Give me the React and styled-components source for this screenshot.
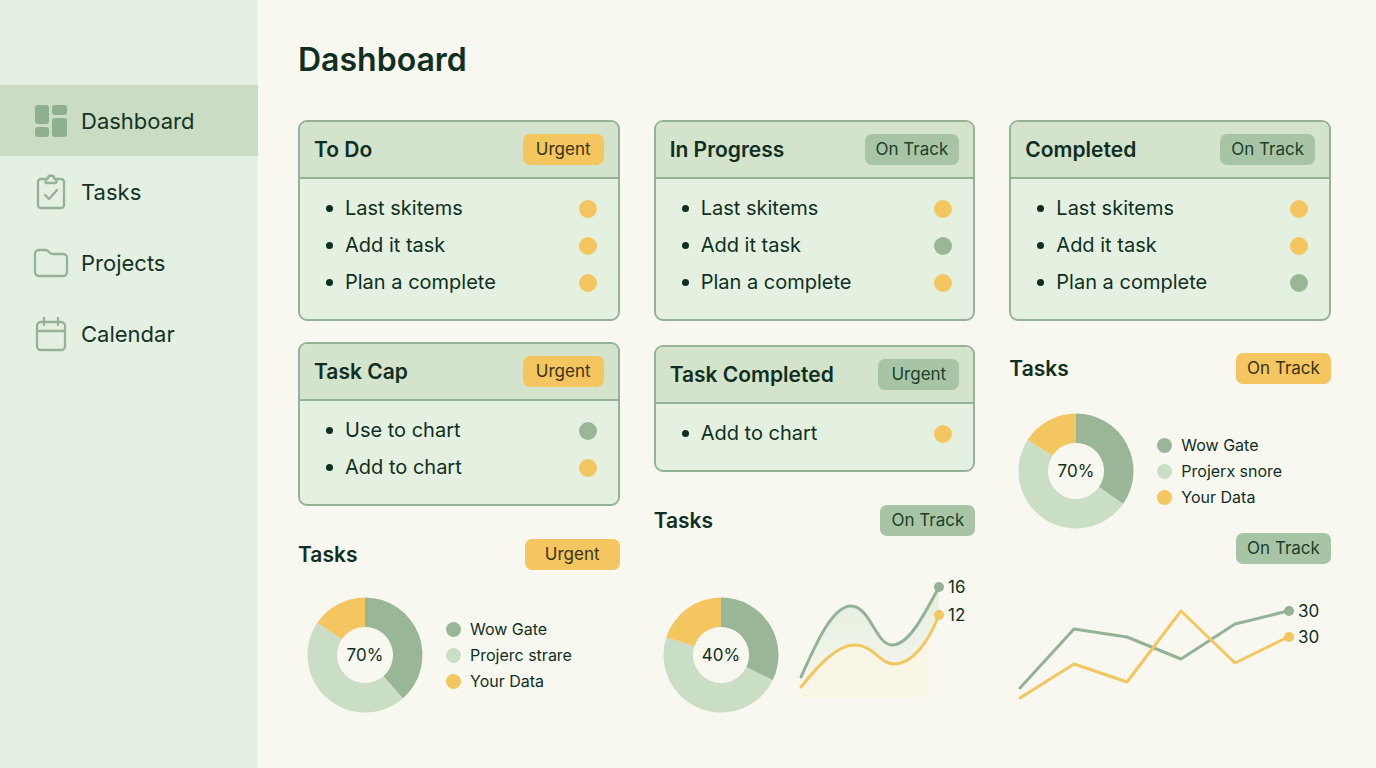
import React from 'react';
import styled, { createGlobalStyle } from 'styled-components';

const colors = {
  ink: '#0f2f22',
  green: '#99b797',
  pale: '#cadec5',
  yellow: '#f3c65f',
  border: '#94b296',
  page: '#f9f8f0',
};

const GlobalStyle = createGlobalStyle`
  * {
    box-sizing: border-box;
  }

  body {
    margin: 0;
    font-family: Inter, 'Liberation Sans', sans-serif;
    color: ${colors.ink};
    background-color: ${colors.page};
  }
`;

const Layout = styled.div`
  display: flex;
  min-height: 100vh;
`;

const Sidebar = styled.nav`
  flex: 0 0 258px;
  padding-top: 85px;
  background-color: #e4f0e1;
`;

const NavLink = styled.a`
  display: flex;
  align-items: center;
  gap: 13px;
  height: 71px;
  padding-left: 34px;
  font-size: 22px;
  color: #143326;
  text-decoration: none;
  background-color: ${props => (props.$active ? '#cadcc4' : 'transparent')};

  svg {
    flex: none;
  }
`;

const Main = styled.main`
  flex: 1;
  min-width: 0;
  padding: 40px 45px 40px 40px;
`;

const PageTitle = styled.h1`
  margin: 0 0 40px;
  font-size: 32px;
  line-height: 40px;
  font-weight: 600;
`;

const Board = styled.div`
  display: grid;
  grid-template-columns: repeat(3, minmax(0, 1fr));
  column-gap: 34px;
`;

const Column = styled.div`
  display: flex;
  flex-direction: column;
`;

const CardBox = styled.section`
  margin-bottom: ${props => props.$space}px;
  border: 2px solid ${colors.border};
  border-radius: 9px;
  background-color: #e4f1e0;
  overflow: hidden;
`;

const Badge = styled.span`
  min-width: 95px;
  padding: 0 11px;
  border-radius: 7px;
  font-size: 17px;
  line-height: 31px;
  text-align: center;
  white-space: nowrap;
  color: ${props => (props.$tone === 'yellow' ? '#3b3316' : '#1c3f2d')};
  background-color: ${props =>
    props.$tone === 'yellow' ? colors.yellow : '#a7c5a4'};
`;

const CardHeader = styled.header`
  display: flex;
  align-items: center;
  justify-content: space-between;
  height: 57px;
  padding: 0 14px;
  border-bottom: 2px solid ${colors.border};
  background-color: #d4e3cc;

  ${Badge} {
    min-width: 81px;
  }
`;

const Heading = styled.h2`
  margin: 0;
  font-size: 21px;
  line-height: 26px;
  font-weight: 600;
`;

const List = styled.ul`
  margin: 0;
  padding: 11px 21px 18px 26px;
  list-style: none;
`;

const Item = styled.li`
  display: flex;
  align-items: center;
  font-size: 20px;
  line-height: 37px;

  &::before {
    content: '';
    width: 7px;
    height: 7px;
    margin-right: 12px;
    border-radius: 50%;
    background-color: ${colors.ink};
  }
`;

const Dot = styled.span`
  flex: none;
  width: ${props => props.$size}px;
  height: ${props => props.$size}px;
  margin-left: ${props => (props.$end ? 'auto' : 0)};
  border-radius: 50%;
  background-color: ${props => colors[props.$color]};
`;

const SectionHeader = styled.header`
  display: flex;
  align-items: center;
  justify-content: ${props => (props.$end ? 'flex-end' : 'space-between')};
  margin-bottom: ${props => props.$space}px;
`;

const ChartRow = styled.div`
  display: flex;
  align-items: ${props => props.$align || 'center'};
  gap: 23px;
  margin-bottom: ${props => props.$space || 0}px;
  padding-left: 9px;
`;

const Legend = styled.ul`
  margin: 0;
  padding: 0;
  list-style: none;
`;

const LegendItem = styled.li`
  display: flex;
  align-items: center;
  gap: 9px;
  font-size: 16px;
  line-height: 26px;
  white-space: nowrap;
`;

const Chart = styled.svg`
  display: block;
  flex: none;
  overflow: visible;
  font-family: inherit;
  font-size: 17px;
  fill: none;
  stroke-width: 3;
  stroke-linejoin: round;
  stroke-linecap: round;

  text {
    fill: ${colors.ink};
  }
`;

const icons = {
  dashboard: (
    <g fill="#8fb08f">
      <rect x="1" y="1" width="14" height="19" rx="3" />
      <rect x="18" y="1" width="15" height="10" rx="3" />
      <rect x="1" y="23" width="14" height="10" rx="3" />
      <rect x="18" y="14" width="15" height="19" rx="3" />
    </g>
  ),
  tasks: (
    <g>
      <path d="M12 4H7a3 3 0 0 0-3 3v23a3 3 0 0 0 3 3h20a3 3 0 0 0 3-3V7a3 3 0 0 0-3-3h-5" />
      <path d="M13 8h8q2 0 1.500-2.500Q22 4 20.500 4Q20 0.500 17 0.500T13.500 4q-1.500 0-2 1.500Q11 8 13 8Z" />
      <path d="M11 20l4 4 8-9" />
    </g>
  ),
  projects: (
    <path d="M1 8a4 4 0 0 1 4-4h6q2 0 3 1l2 2q1 1 3 1h10a4 4 0 0 1 4 4v14a4 4 0 0 1-4 4H5a4 4 0 0 1-4-4Z" />
  ),
  calendar: (
    <g>
      <rect x="3" y="5" width="28" height="28" rx="4" />
      <path d="M3 14h28M10 1v7M24 1v7" />
    </g>
  ),
};

function Icon({ name }) {
  return (
    <svg
      width="34"
      height="34"
      viewBox="0 0 34 34"
      fill="none"
      stroke={name === 'dashboard' ? 'none' : '#96b198'}
      strokeWidth="2.3"
      strokeLinecap="round"
      strokeLinejoin="round"
      overflow="visible"
      aria-hidden="true"
    >
      {icons[name]}
    </svg>
  );
}

function Card({ title, badge, tone, space, items }) {
  return (
    <CardBox $space={space}>
      <CardHeader>
        <Heading>{title}</Heading>
        <Badge $tone={tone}>{badge}</Badge>
      </CardHeader>
      <List>
        {items.map(([text, color]) => (
          <Item key={text}>
            {text}
            <Dot $size={18} $color={color} $end />
          </Item>
        ))}
      </List>
    </CardBox>
  );
}

function point(angle, radius) {
  const rad = ((angle - 90) * Math.PI) / 180;
  return `${58 + radius * Math.cos(rad)} ${58 + radius * Math.sin(rad)}`;
}

function slice(from, to) {
  const large = to - from > 180 ? 1 : 0;
  return `M${point(from, 57.5)}A57.5 57.5 0 ${large} 1 ${point(to, 57.5)}L${point(to, 28)}A28 28 0 ${large} 0 ${point(from, 28)}Z`;
}

// green runs from the top to greenEnd, yellow from yellowStart back to the top
function Donut({ label, greenEnd, yellowStart }) {
  return (
    <Chart width="116" height="116" viewBox="0 0 116 116">
      <path d={slice(0, greenEnd)} fill={colors.green} />
      <path d={slice(greenEnd, yellowStart)} fill={colors.pale} />
      <path d={slice(yellowStart, 360)} fill={colors.yellow} />
      <text x="58" y="64" textAnchor="middle">
        {label}
      </text>
    </Chart>
  );
}

function DonutLegend({ project }) {
  return (
    <Legend>
      <LegendItem>
        <Dot $size={15} $color="green" />
        Wow Gate
      </LegendItem>
      <LegendItem>
        <Dot $size={15} $color="pale" />
        {project}
      </LegendItem>
      <LegendItem>
        <Dot $size={15} $color="yellow" />
        Your Data
      </LegendItem>
    </Legend>
  );
}

function AreaChart() {
  const green =
    'M1 98C17 62 33 27 51 27C70 27 76 66 92 66C108 66 122 40 139 8';
  const yellow =
    'M1 108C17 88 36 66 55 66C73 66 80 85 94 85C112 85 128 64 139 36';

  return (
    <Chart width="168" height="134" viewBox="2 0 168 134">
      <defs>
        <linearGradient id="greenArea" x1="0" y1="0" x2="0" y2="1">
          <stop offset="0" stopColor="#cfe5cd" stopOpacity="0.5" />
          <stop offset="1" stopColor="#cfe5cd" stopOpacity="0.1" />
        </linearGradient>
      </defs>
      <path
        d={`${green}L139 36C128 64 112 85 94 85C80 85 73 66 55 66C36 66 17 88 1 108Z`}
        fill="url(#greenArea)"
      />
      <path
        d="M1 108C17 88 36 66 55 66C73 66 80 85 94 85C110 85 121 72 129 58V119H1Z"
        fill="#f8e6b8"
        fillOpacity="0.15"
      />
      <path d={green} stroke={colors.border} />
      <path d={yellow} stroke={colors.yellow} />
      <circle cx="139" cy="8" r="5" fill={colors.border} />
      <circle cx="139" cy="36" r="5" fill={colors.yellow} />
      <text x="148" y="14">
        16
      </text>
      <text x="148" y="42">
        12
      </text>
    </Chart>
  );
}

function LineChart() {
  return (
    <Chart width="310" height="100" viewBox="0 0 310 100">
      <path
        d="M2 88L56 29L109 37L163 59L217 24L270 11"
        stroke={colors.border}
      />
      <path
        d="M2 98L56 64L109 82L163 11L217 63L270 37"
        stroke={colors.yellow}
      />
      <circle cx="271" cy="11" r="5" fill={colors.border} />
      <circle cx="271" cy="37" r="5" fill={colors.yellow} />
      <text x="280" y="17">
        30
      </text>
      <text x="280" y="43">
        30
      </text>
    </Chart>
  );
}

const nav = [
  ['dashboard', 'Dashboard'],
  ['tasks', 'Tasks'],
  ['projects', 'Projects'],
  ['calendar', 'Calendar'],
];

function App() {
  return (
    <Layout>
      <GlobalStyle />
      <Sidebar>
        {nav.map(([name, label]) => (
          <NavLink key={name} href={`#${name}`} $active={name === 'dashboard'}>
            <Icon name={name} />
            {label}
          </NavLink>
        ))}
      </Sidebar>
      <Main>
        <PageTitle>Dashboard</PageTitle>
        <Board>
          <Column>
            <Card
              title="To Do"
              badge="Urgent"
              tone="yellow"
              space={21}
              items={[
                ['Last skitems', 'yellow'],
                ['Add it task', 'yellow'],
                ['Plan a complete', 'yellow'],
              ]}
            />
            <Card
              title="Task Cap"
              badge="Urgent"
              tone="yellow"
              space={33}
              items={[
                ['Use to chart', 'green'],
                ['Add to chart', 'yellow'],
              ]}
            />
            <SectionHeader $space={27}>
              <Heading>Tasks</Heading>
              <Badge $tone="yellow">Urgent</Badge>
            </SectionHeader>
            <ChartRow>
              <Donut label="70%" greenEnd={139} yellowStart={304} />
              <DonutLegend project="Projerc strare" />
            </ChartRow>
          </Column>
          <Column>
            <Card
              title="In Progress"
              badge="On Track"
              tone="green"
              space={24}
              items={[
                ['Last skitems', 'yellow'],
                ['Add it task', 'green'],
                ['Plan a complete', 'yellow'],
              ]}
            />
            <Card
              title="Task Completed"
              badge="Urgent"
              tone="green"
              space={33}
              items={[['Add to chart', 'yellow']]}
            />
            <SectionHeader $space={43}>
              <Heading>Tasks</Heading>
              <Badge $tone="green">On Track</Badge>
            </SectionHeader>
            <ChartRow $align="flex-end">
              <Donut label="40%" greenEnd={116} yellowStart={288} />
              <AreaChart />
            </ChartRow>
          </Column>
          <Column>
            <Card
              title="Completed"
              badge="On Track"
              tone="green"
              space={32}
              items={[
                ['Last skitems', 'yellow'],
                ['Add it task', 'yellow'],
                ['Plan a complete', 'green'],
              ]}
            />
            <SectionHeader $space={29}>
              <Heading>Tasks</Heading>
              <Badge $tone="yellow">On Track</Badge>
            </SectionHeader>
            <ChartRow $space={4}>
              <Donut label="70%" greenEnd={125} yellowStart={303} />
              <DonutLegend project="Projerx snore" />
            </ChartRow>
            <SectionHeader $space={36} $end>
              <Badge $tone="green">On Track</Badge>
            </SectionHeader>
            <ChartRow>
              <LineChart />
            </ChartRow>
          </Column>
        </Board>
      </Main>
    </Layout>
  );
}

export default App;
